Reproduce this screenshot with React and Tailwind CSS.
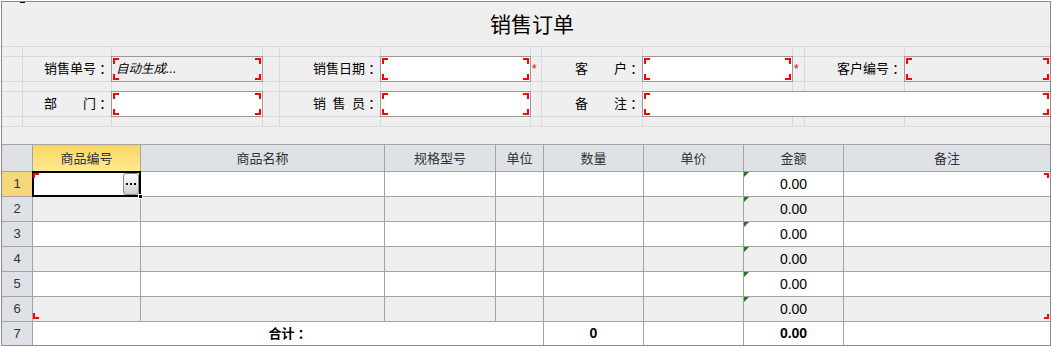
import React from 'react';

function Corners({ color = 'border-[#ff0000]' }) {
  return (
    <>
      <span className={`absolute left-px top-px w-[6px] h-[6px] border-l-2 border-t-2 ${color}`} />
      <span className={`absolute right-px top-px w-[6px] h-[6px] border-r-2 border-t-2 ${color}`} />
      <span className={`absolute left-px bottom-px w-[6px] h-[6px] border-l-2 border-b-2 ${color}`} />
      <span className={`absolute right-px bottom-px w-[6px] h-[6px] border-r-2 border-b-2 ${color}`} />
    </>
  );
}

function Blank() {
  return <div className="bg-[#efefef]" />;
}

// colon drawn with the TC face so it sits centred in its box, as in the reference
function Colon() {
  return <span className="font-['Noto_Sans_CJK_TC',sans-serif]">：</span>;
}

function Label({ children }) {
  return (
    <div className="bg-[#efefef] flex items-center justify-end pr-[2px] text-[13px] text-black whitespace-pre">
      {children}
      <Colon />
    </div>
  );
}

function Box({ gray, span = '', children }) {
  return (
    <div
      className={`relative -m-px border border-[#9a9a9a] flex items-center pl-[4px] ${
        gray ? 'bg-[#efefef]' : 'bg-white'
      } ${span}`}
    >
      <Corners />
      {children}
    </div>
  );
}

function Star() {
  return <div className="bg-[#efefef] text-[#e00000] text-[12px] leading-none pt-[6px] pl-px">*</div>;
}

const headers = ['商品编号', '商品名称', '规格型号', '单位', '数量', '单价', '金额', '备注'];

function DataRow({ n }) {
  const bg = n % 2 === 0 ? 'bg-[#efefef]' : 'bg-white';
  return (
    <>
      <div
        className={`flex items-center justify-center text-[13px] text-[#333] ${
          n === 1 ? 'bg-[#f7d77b]' : 'bg-[#dee2e7]'
        }`}
      >
        {n}
      </div>
      {/* 商品编号 */}
      <div className={`relative ${bg}`}>
        {n === 1 && (
          <>
            <div className="absolute -left-px -top-px -right-px -bottom-px border-2 border-black z-10" />
            <div className="absolute right-px top-px bottom-px w-[16px] rounded-[3px] border border-[#8a8a8a] bg-linear-to-b from-white to-[#cfcfcf] flex items-center justify-center gap-[2px] z-10">
              <span className="w-[2px] h-[2px] bg-black" />
              <span className="w-[2px] h-[2px] bg-black" />
              <span className="w-[2px] h-[2px] bg-black" />
            </div>
            <span className="absolute -right-[3px] -bottom-[3px] w-[5px] h-[5px] bg-black border border-white z-20" />
            <span className="absolute left-0 top-px w-[6px] h-[5px] border-l-2 border-t-2 border-[#ff0000] z-20" />
          </>
        )}
        {n === 6 && (
          <span className="absolute left-0 bottom-[2px] w-[6px] h-[6px] border-l-2 border-b-2 border-[#ff0000]" />
        )}
      </div>
      <div className={bg} />
      <div className={bg} />
      <div className={bg} />
      <div className={bg} />
      <div className={bg} />
      <div className={`relative ${bg} flex items-center justify-center text-[14px] text-black`}>
        <span className="absolute left-0 top-0 w-0 h-0 border-t-[5px] border-t-[#1d7a1d] border-r-[5px] border-r-transparent" />
        0.00
      </div>
      <div className={`relative ${bg}`}>
        {n === 1 && (
          <span className="absolute right-[1px] top-px w-[5px] h-[5px] border-r-2 border-t-2 border-[#ff0000]" />
        )}
        {n === 6 && (
          <span className="absolute right-[1px] bottom-[2px] w-[5px] h-[5px] border-r-2 border-b-2 border-[#ff0000]" />
        )}
      </div>
    </>
  );
}

export default function App() {
  return (
    <div className="bg-white w-[1052px] h-[346px] font-['Liberation_Sans','Noto_Sans_CJK_SC',sans-serif]">
      <div className="relative ml-px mt-px w-[1050px] h-[345px] border border-[#8c8c8c] bg-[#efefef] overflow-hidden">
        <span className="absolute left-[18px] top-0 w-[5px] h-px bg-black" />

        <div className="h-[44px] flex items-center justify-center pl-[12px] text-[21px] text-black font-['Noto_Sans_CJK_SC',sans-serif]">
          销售订单
        </div>

        {/* header form */}
        <div className="grid gap-px bg-[#d9d9d9] border-y border-[#d9d9d9] grid-cols-[20px_88px_150px_16px_100px_149px_10px_100px_149px_11px_99px_145px] grid-rows-[9px_24px_9px_24px_9px]">
          {Array.from({ length: 12 }).map((_, i) => (
            <Blank key={'a' + i} />
          ))}

          <Blank />
          <Label>销售单号</Label>
          <Box gray>
            <span className="italic text-[12.5px] text-black">自动生成...</span>
          </Box>
          <Blank />
          <Label>销售日期</Label>
          <Box />
          <Star />
          <Label>客　　户</Label>
          <Box />
          <Star />
          <Label>客户编号</Label>
          <Box gray />

          {Array.from({ length: 12 }).map((_, i) => (
            <Blank key={'b' + i} />
          ))}

          <Blank />
          <Label>部　　门</Label>
          <Box />
          <Blank />
          <Label>销&ensp;售&ensp;员</Label>
          <Box />
          <Blank />
          <Label>备　　注</Label>
          <Box span="col-span-4" />

          {Array.from({ length: 12 }).map((_, i) => (
            <Blank key={'c' + i} />
          ))}
        </div>

        <div className="h-[17px]" />

        {/* detail table */}
        <div className="grid gap-px bg-[#a3a3a3] border-t border-[#a3a3a3] grid-cols-[30px_107px_243px_110px_47px_99px_99px_99px_206px] grid-rows-[26px_24px_24px_24px_24px_24px_24px_23px]">
          <div className="bg-[#dee2e7]" />
          {headers.map((h, i) => (
            <div
              key={h}
              className={`flex items-center justify-center pt-[2px] text-[13px] text-[#2f3338] ${
                i === 0 ? 'bg-linear-to-b from-[#fcd463] to-[#ffea90]' : 'bg-[#dee2e7]'
              }`}
            >
              {h}
            </div>
          ))}

          {[1, 2, 3, 4, 5, 6].map((n) => (
            <DataRow key={n} n={n} />
          ))}

          <div className="bg-[#dee2e7] flex items-center justify-center text-[13px] text-[#333]">7</div>
          <div className="col-span-4 bg-white flex items-center justify-center text-[13px] font-bold text-black">
            合计
            <Colon />
          </div>
          <div className="bg-white flex items-center justify-center text-[14px] font-bold text-black">0</div>
          <div className="bg-white" />
          <div className="bg-white flex items-center justify-center text-[14px] font-bold text-black">0.00</div>
          <div className="bg-white" />
        </div>
      </div>
    </div>
  );
}
